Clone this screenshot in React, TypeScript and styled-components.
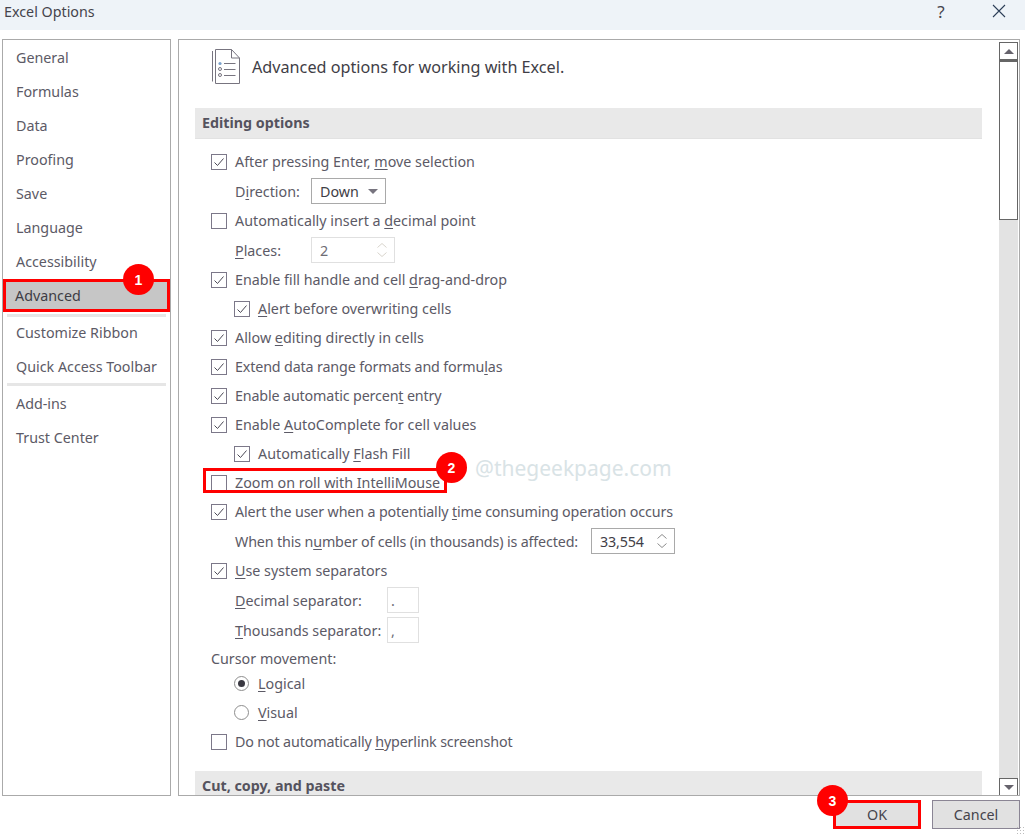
import * as React from "react"
import styled, { createGlobalStyle } from "styled-components"

const GlobalStyle = createGlobalStyle`
  html, body {
    margin: 0;
    padding: 0;
    background: #fff;
    overflow: hidden;
  }
  body {
    font-family: "Noto Sans", "Open Sans", sans-serif;
    font-size: 14.3px;
    color: #5c5a66;
  }
  u {
    text-underline-offset: 2px;
    text-decoration-thickness: 1px;
  }
`

const Dialog = styled.div`
  position: relative;
  width: 1025px;
  height: 835px;
  display: flex;
  flex-direction: column;
  background: #fff;
  overflow: hidden;
`

const TitleBar = styled.div`
  height: 30px;
  flex: none;
  box-sizing: border-box;
  display: flex;
  align-items: center;
  background: #eef3f8;
  padding: 0 19px 8px 4px;
  color: #45444c;
`

const TitleText = styled.div`
  flex: 1;
`

const HelpMark = styled.div`
  width: 20px;
  margin-right: 41px;
  text-align: center;
  font-size: 17px;
  color: #45444c;
`

const Body = styled.div`
  flex: none;
  height: 757px;
  margin-top: 9px;
  padding: 0 5px 0 2px;
  display: flex;
  gap: 7px;
`

const Nav = styled.nav`
  width: 167px;
  flex: none;
  border: 1px solid #aaa;
  display: flex;
  flex-direction: column;
`

const NavItem = styled.div<{ $active?: boolean }>`
  position: relative;
  height: ${(p) => (p.$active ? 33 : 34)}px;
  flex: none;
  display: flex;
  align-items: center;
  padding-left: ${(p) => (p.$active ? 12 : 13)}px;
  color: ${(p) => (p.$active ? "#3e3d45" : "#5c5a66")};
  background: ${(p) => (p.$active ? "#c6c6c6" : "transparent")};
  margin-top: ${(p) => (p.$active ? 1 : 0)}px;
  outline: ${(p) => (p.$active ? "3px solid #f00" : "none")};
  outline-offset: -3px;
`

const NavDivider = styled.div<{ $space: number; $pull?: number }>`
  height: 3px;
  flex: none;
  margin: ${(p) => p.$space}px 4px ${(p) => p.$pull ?? 0}px;
  background: #e6e6e6;
`

const Panel = styled.main`
  flex: 1;
  min-width: 0;
  border: 1px solid #aaa;
  display: flex;
  overflow: hidden;
`

const Scroller = styled.div`
  width: 787px;
  flex: none;
  margin-left: 16px;
`

const PageHead = styled.div`
  height: 68px;
  display: flex;
  align-items: center;
  gap: 11px;
  padding: 0 0 15px 16px;
  color: #3f3e46;
  font-size: 16.2px;
  box-sizing: border-box;
`

const SectionTitle = styled.div`
  height: 31px;
  display: flex;
  align-items: center;
  padding: 0 0 2px 7px;
  background: #e9e9e9;
  border-bottom: 1px solid #e2e2e2;
  box-sizing: border-box;
  font-weight: 700;
  color: #55535e;
  margin-bottom: 8px;

  &:last-child {
    margin: 15px 0 0;
  }
`

const Row = styled.div<{ $indent?: number; $tall?: boolean; $tight?: boolean }>`
  position: relative;
  height: ${(p) => (p.$tall ? 30 : 29)}px;
  box-sizing: border-box;
  display: flex;
  align-items: center;
  padding-left: ${(p) => p.$indent ?? 0}px;
  letter-spacing: ${(p) => (p.$tight ? "-0.15px" : "normal")};
`

const CursorCaption = styled(Row)`
  height: 24px;
  padding-top: 3px;
`

const BoxMark = styled.span`
  width: 14px;
  height: 14px;
  flex: none;
  border: 1px solid #7c7889;
  margin-right: 8px;
  display: flex;
  align-items: center;
  justify-content: center;
  background: #fff;
`

const RadioMark = styled.span<{ $on?: boolean }>`
  width: 13px;
  height: 13px;
  flex: none;
  margin-right: 9px;
  border: 1px solid #8e8e8e;
  border-radius: 50%;
  display: flex;
  align-items: center;
  justify-content: center;

  &::after {
    content: "";
    width: 7px;
    height: 7px;
    border-radius: 50%;
    background: ${(p) => (p.$on ? "#3a3942" : "transparent")};
  }
`

const FieldLabel = styled.label<{ $width: number }>`
  flex: none;
  width: ${(p) => p.$width}px;
`

const Field = styled.div<{ $width: number; $faint?: boolean }>`
  width: ${(p) => p.$width}px;
  height: 26px;
  flex: none;
  box-sizing: border-box;
  border: 1px solid ${(p) => (p.$faint ? "#e0e0e0" : "#a9a9a9")};
  display: flex;
  align-items: center;
  justify-content: space-between;
  padding: 0 7px 0 8px;
  color: ${(p) => (p.$faint ? "#6e6d75" : "#3f3e46")};
  background: #fff;
`

const SmallField = styled(Field)`
  padding: 0 0 0 3px;
`

const SpinArrows = styled.span`
  display: flex;
  flex-direction: column;
  gap: 4px;
`

const Scrollbar = styled.div`
  width: 19px;
  flex: none;
  margin: 2px 0 0 17px;
  height: 754px;
  display: flex;
  flex-direction: column;
  background: #e3e3e3;
`

const ScrollButton = styled.div`
  height: 18px;
  box-sizing: border-box;
  flex: none;
  border: 1px solid #666;
  display: flex;
  align-items: center;
  justify-content: center;
  background: #fff;
`

const ScrollThumb = styled.div`
  height: 160px;
  flex: none;
  box-sizing: border-box;
  border: 1px solid #666;
  border-top-width: 2px;
  background: #fff;
`

const ScrollTrack = styled.div`
  flex: 1;
`

const Footer = styled.div`
  flex: 1;
  display: flex;
  justify-content: flex-end;
  align-items: flex-start;
  gap: 11px;
  padding: 4px 5px 0 0;
`

const ActionButton = styled.div<{ $marked?: boolean }>`
  position: relative;
  width: 88px;
  height: 29px;
  box-sizing: border-box;
  display: flex;
  align-items: center;
  justify-content: center;
  background: #e1e1e1;
  color: #45444c;
  border: ${(p) => (p.$marked ? "3px solid #f00" : "1px solid #8a8594")};
`

const Badge = styled.div<{ $x: number; $y: number }>`
  position: absolute;
  left: ${(p) => p.$x}px;
  top: ${(p) => p.$y}px;
  width: 31px;
  height: 31px;
  border-radius: 50%;
  background: #f00;
  color: #fff;
  display: flex;
  align-items: center;
  justify-content: center;
  font-family: "Liberation Sans", sans-serif;
  font-weight: 700;
  font-size: 14px;
  z-index: 3;
`

const MarkFrame = styled.div`
  position: absolute;
  left: 8px;
  top: 0;
  width: 244px;
  height: 25px;
  box-sizing: border-box;
  border: 3px solid #f00;
  pointer-events: none;
`

const Watermark = styled.div`
  position: absolute;
  left: 475px;
  top: 454px;
  font-size: 21px;
  color: #d9e3e6;
  z-index: 2;
`

const Grip = styled.div`
  position: absolute;
  right: 1px;
  bottom: 1px;
  width: 8px;
  height: 8px;
  background-image: radial-gradient(#bdbdbd 1px, transparent 1px);
  background-size: 3px 3px;
`

const Checkmark = () => (
  <svg width="12" height="12" viewBox="0 0 12 12" fill="none">
    <path d="M1.5 6.5 L4.5 9.5 L10.5 2.5" stroke="#4a4855" strokeWidth="1" />
  </svg>
)

const Triangle = ({ down, color = "#66636c" }: { down?: boolean; color?: string }) => (
  <svg width="10" height="5" viewBox="0 0 10 5">
    <path d={down ? "M0 0 H10 L5 5 Z" : "M0 5 H10 L5 0 Z"} fill={color} />
  </svg>
)

const Chevron = ({ down, color }: { down?: boolean; color: string }) => (
  <svg width="10" height="5" viewBox="0 0 10 5" fill="none">
    <path d={down ? "M0.5 0.5 L5 4.5 L9.5 0.5" : "M0.5 4.5 L5 0.5 L9.5 4.5"} stroke={color} />
  </svg>
)

const Spin = ({ color }: { color: string }) => (
  <SpinArrows>
    <Chevron color={color} />
    <Chevron down color={color} />
  </SpinArrows>
)

const CheckRow: React.FC<{ checked?: boolean; indent?: number; tight?: boolean; children: React.ReactNode }> = ({
  checked,
  indent,
  tight,
  children,
}) => (
  <Row $indent={indent} $tight={tight}>
    <BoxMark>{checked && <Checkmark />}</BoxMark>
    <span>{children}</span>
  </Row>
)

const PageIcon = () => (
  <svg width="30" height="37" viewBox="0 0 30 37" fill="none" stroke="#77747f">
    <path d="M1.5 3 V33.5" />
    <path d="M4.5 35.5 H28.5 V10 L20.5 1.5 H4.5 Z" />
    <path d="M20.5 1.5 V10 H28.5" />
    <circle cx="9" cy="15.5" r="1.6" fill="#7ba2cc" stroke="none" />
    <circle cx="9" cy="21" r="1.5" />
    <circle cx="9" cy="27" r="1.5" />
    <path d="M13 15.5 H24.5 M13 21.5 H24.5 M13 27.5 H24.5" />
  </svg>
)

const CloseIcon = () => (
  <svg width="14" height="14" viewBox="0 0 14 14" fill="none" stroke="#2c3e58" strokeWidth="1.1">
    <path d="M1 1 L13 13 M13 1 L1 13" />
  </svg>
)

const topNav = ["General", "Formulas", "Data", "Proofing", "Save", "Language"]

export default function App() {
  return (
    <Dialog>
      <GlobalStyle />
      <TitleBar>
        <TitleText>Excel Options</TitleText>
        <HelpMark>?</HelpMark>
        <CloseIcon />
      </TitleBar>
      <Body>
        <Nav>
          {topNav.map((n) => (
            <NavItem key={n}>{n}</NavItem>
          ))}
          <NavItem>Accessibility</NavItem>
          <NavItem $active>
            Advanced
            <Badge $x={120} $y={-15}>1</Badge>
          </NavItem>
          <NavDivider $space={2} $pull={-2} />
          <NavItem>Customize Ribbon</NavItem>
          <NavItem>Quick Access Toolbar</NavItem>
          <NavDivider $space={0} />
          <NavItem>Add-ins</NavItem>
          <NavItem>Trust Center</NavItem>
        </Nav>
        <Panel>
          <Scroller>
            <PageHead>
              <PageIcon />
              Advanced options for working with Excel.
            </PageHead>
            <SectionTitle>Editing options</SectionTitle>
            <CheckRow checked indent={16}>After pressing Enter, <u>m</u>ove selection</CheckRow>
            <Row $indent={40} $tall>
              <FieldLabel $width={76}>D<u>i</u>rection:</FieldLabel>
              <Field $width={75}>
                Down
                <Triangle down color="#77747f" />
              </Field>
            </Row>
            <CheckRow indent={16}>Automatically insert a <u>d</u>ecimal point</CheckRow>
            <Row $indent={40} $tall>
              <FieldLabel $width={76}><u>P</u>laces:</FieldLabel>
              <Field $width={84} $faint>
                2
                <Spin color="#d8d4cc" />
              </Field>
            </Row>
            <CheckRow checked indent={16}>Enable fill handle and cell <u>d</u>rag-and-drop</CheckRow>
            <CheckRow checked indent={39}><u>A</u>lert before overwriting cells</CheckRow>
            <CheckRow checked indent={16}>Allow <u>e</u>diting directly in cells</CheckRow>
            <CheckRow checked indent={16} tight>Extend data range formats and formu<u>l</u>as</CheckRow>
            <CheckRow checked indent={16} tight>Enable automatic percen<u>t</u> entry</CheckRow>
            <CheckRow checked indent={16}>Enable <u>A</u>utoComplete for cell values</CheckRow>
            <CheckRow checked indent={39}>Automatically <u>F</u>lash Fill</CheckRow>
            <Row $indent={16}>
              <MarkFrame />
              <BoxMark />
              <span><u>Z</u>oom on roll with IntelliMouse</span>
            </Row>
            <CheckRow checked indent={16} tight>Alert the user when a potentially <u>t</u>ime consuming operation occurs</CheckRow>
            <Row $indent={40} $tall $tight>
              <FieldLabel $width={356}>When this n<u>u</u>mber of cells (in thousands) is affected:</FieldLabel>
              <Field $width={84}>
                33,554
                <Spin color="#8c8c8c" />
              </Field>
            </Row>
            <CheckRow checked indent={16}><u>U</u>se system separators</CheckRow>
            <Row $indent={40} $tall>
              <FieldLabel $width={152}><u>D</u>ecimal separator:</FieldLabel>
              <SmallField $width={32} $faint>.</SmallField>
            </Row>
            <Row $indent={40} $tall>
              <FieldLabel $width={152}><u>T</u>housands separator:</FieldLabel>
              <SmallField $width={32} $faint>,</SmallField>
            </Row>
            <CursorCaption $indent={16}>Cursor movement:</CursorCaption>
            <Row $indent={39}>
              <RadioMark $on />
              <span><u>L</u>ogical</span>
            </Row>
            <Row $indent={39}>
              <RadioMark />
              <span><u>V</u>isual</span>
            </Row>
            <CheckRow indent={16} tight>Do not automatically <u>h</u>yperlink screenshot</CheckRow>
            <SectionTitle>Cut, copy, and paste</SectionTitle>
          </Scroller>
          <Scrollbar>
            <ScrollButton><Triangle /></ScrollButton>
            <ScrollThumb />
            <ScrollTrack />
            <ScrollButton><Triangle down /></ScrollButton>
          </Scrollbar>
        </Panel>
      </Body>
      <Footer>
        <ActionButton $marked>
          OK
          <Badge $x={-19} $y={-18}>3</Badge>
        </ActionButton>
        <ActionButton>Cancel</ActionButton>
      </Footer>
      <Badge $x={436} $y={452}>2</Badge>
      <Watermark>@thegeekpage.com</Watermark>
      <Grip />
    </Dialog>
  )
}
